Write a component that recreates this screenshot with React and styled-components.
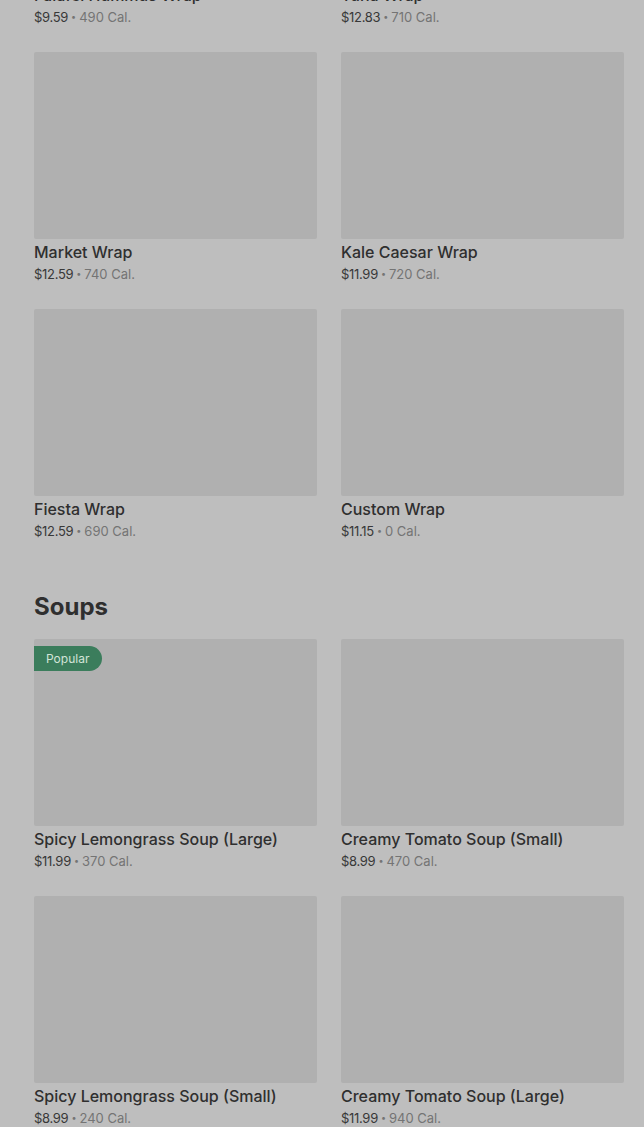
import React from 'react';
import styled, { createGlobalStyle } from 'styled-components';

const sections = [
    {
        title: null,
        items: [
            { name: 'Falafel Hummus Wrap', price: '$9.59', cal: '490 Cal.' },
            { name: 'Tuna Wrap', price: '$12.83', cal: '710 Cal.' },
            { name: 'Market Wrap', price: '$12.59', cal: '740 Cal.' },
            { name: 'Kale Caesar Wrap', price: '$11.99', cal: '720 Cal.' },
            { name: 'Fiesta Wrap', price: '$12.59', cal: '690 Cal.' },
            { name: 'Custom Wrap', price: '$11.15', cal: '0 Cal.' },
        ],
    },
    {
        title: 'Soups',
        items: [
            { name: 'Spicy Lemongrass Soup (Large)', price: '$11.99', cal: '370 Cal.', popular: true },
            { name: 'Creamy Tomato Soup (Small)', price: '$8.99', cal: '470 Cal.' },
            { name: 'Spicy Lemongrass Soup (Small)', price: '$8.99', cal: '240 Cal.' },
            { name: 'Creamy Tomato Soup (Large)', price: '$11.99', cal: '940 Cal.' },
        ],
    },
];

export default function App() {
    return (
        <>
            <GlobalStyle />
            <Page>
                {sections.map((section, i) => (
                    <Section key={i}>
                        {section.title && <Heading>{section.title}</Heading>}
                        <Grid>
                            {section.items.map((item) => (
                                <Card key={item.name}>
                                    <Thumb>{item.popular && <Badge>Popular</Badge>}</Thumb>
                                    <Name>{item.name}</Name>
                                    <Meta>
                                        <Price>{item.price}</Price>
                                        <Dot>•</Dot>
                                        <Cal>{item.cal}</Cal>
                                    </Meta>
                                </Card>
                            ))}
                        </Grid>
                    </Section>
                ))}
            </Page>
        </>
    );
}

const GlobalStyle = createGlobalStyle`
    html, body {
        margin: 0;
        padding: 0;
        background: #bebebe;
        overflow: hidden;
    }
    body {
        font-family: Inter, "Noto Sans", sans-serif;
        color: #2e2e2e;
    }
`;

const Page = styled.div`
    display: flex;
    flex-direction: column;
    gap: 50px;
    margin-top: -205px;
    padding: 0 20px 40px 34px;
`;

const Section = styled.section`
    display: flex;
    flex-direction: column;
    gap: 16px;
`;

const Heading = styled.h2`
    margin: 0;
    font-size: 24px;
    line-height: 32px;
    font-weight: 700;
    color: #2f2f2f;
`;

const Grid = styled.div`
    display: grid;
    grid-template-columns: 283px 283px;
    column-gap: 24px;
    row-gap: 25px;
`;

const Card = styled.div`
    display: flex;
    flex-direction: column;
`;

const Thumb = styled.div`
    position: relative;
    height: 187px;
    background: #b0b0b0;
    border-radius: 2px;
`;

const Badge = styled.span`
    position: absolute;
    top: 7px;
    left: 0;
    height: 25px;
    padding: 0 13px 0 12px;
    display: flex;
    align-items: center;
    background: #3b7d5c;
    color: #d3e4d8;
    font-size: 12px;
    border-radius: 0 13px 13px 0;
`;

const Name = styled.div`
    margin-top: 3px;
    font-size: 16px;
    line-height: 20px;
    font-weight: 500;
    color: #2f2f2f;
`;

const Meta = styled.div`
    display: flex;
    align-items: center;
    gap: 3px;
    margin-top: 2px;
    font-size: 13px;
    line-height: 20px;
`;

const Price = styled.span`
    color: #383838;
    letter-spacing: -0.3px;
`;

const Dot = styled.span`
    color: #747474;
    font-size: 9px;
`;

const Cal = styled.span`
    color: #747474;
`;
